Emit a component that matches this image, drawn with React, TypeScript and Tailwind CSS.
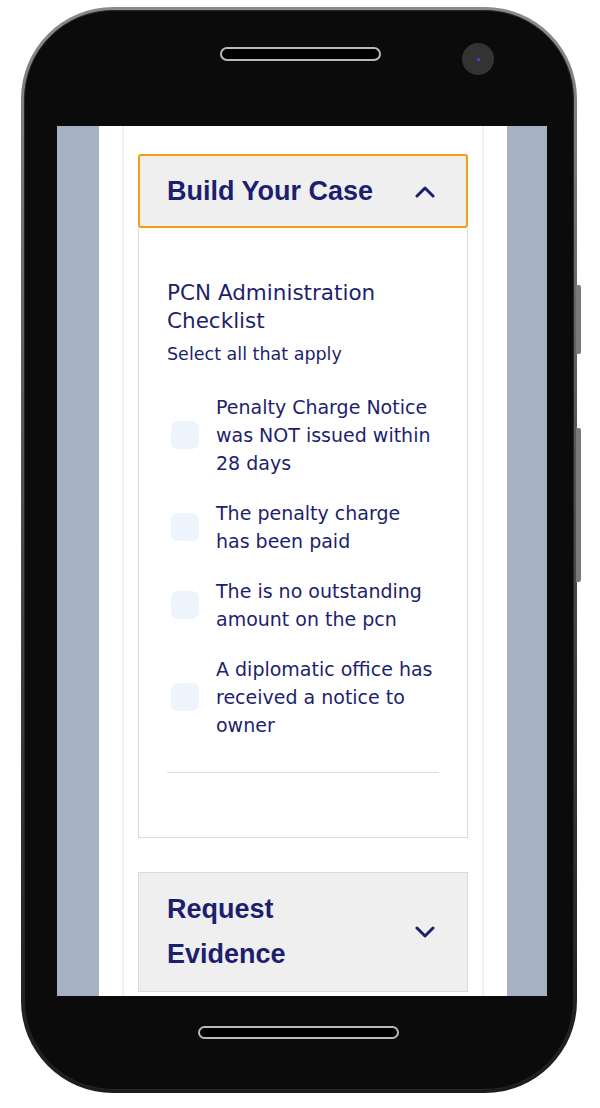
import React from "react";

const navy = "text-[#1d1f6e]";

function Chevron({ up }: { up?: boolean }) {
  return (
    <svg width="20" height="13" viewBox="0 0 20 13" className="shrink-0">
      <polyline
        points={up ? "2,11 10,3 18,11" : "2,2 10,10 18,2"}
        fill="none"
        stroke="#1d1f6e"
        strokeWidth="3"
        strokeLinecap="round"
        strokeLinejoin="round"
      />
    </svg>
  );
}

function Item({ text }: { text: string }) {
  return (
    <div className="flex items-center">
      <div className="ml-[4px] h-[28px] w-[28px] shrink-0 rounded-[7px] bg-[#edf4fe]" />
      <div className={`ml-[17px] w-[220px] text-[19px] leading-[28px] ${navy}`}>{text}</div>
    </div>
  );
}

export default function App() {
  return (
    <div className="relative h-[1108px] w-[600px] overflow-hidden bg-white" style={{ fontFamily: "'DejaVu Sans', Verdana, sans-serif" }}>
      {/* side buttons */}
      <div className="absolute left-[576px] top-[285px] h-[69px] w-[5px] rounded-r-[2px] bg-[#7a7a7a]" />
      <div className="absolute left-[576px] top-[428px] h-[154px] w-[5px] rounded-r-[2px] bg-[#7a7a7a]" />

      <div className="ml-[21px] mt-[7px] h-[1086px] w-[556px] rounded-[92px] bg-linear-to-b from-[#8a8a8a] via-[#4a4a4a] to-[#1c1c1c] p-[3px]">
        <div className="flex h-full w-full flex-col rounded-[89px] border border-[#262626] bg-[#0b0b0b]">
          {/* top bezel */}
          <div className="flex h-[115px] shrink-0 items-start">
            <div className="ml-[195px] mt-[36px] h-[14px] w-[161px] rounded-full border-2 border-[#b9b9b9] bg-black" />
            <div className="ml-[81px] mt-[32px] flex h-[32px] w-[32px] items-center justify-center rounded-full bg-[#333333]">
              <div className="h-[3px] w-[3px] rounded-full bg-[#3a4cff]" />
            </div>
          </div>

          {/* screen */}
          <div className="ml-[32px] flex h-[870px] w-[490px] shrink-0 justify-center overflow-hidden bg-[#a6b2c4]">
            <div className="ml-[2px] flex h-full w-[408px] justify-center bg-white">
              <div className="h-[900px] w-[362px] border-x-2 border-[#f1f1f1] px-[14px] pt-[28px]">
                {/* Build Your Case header */}
                <div className="flex items-center justify-between rounded-[3px] border-2 border-[#eea20f] bg-[#efefef] py-[12.5px] pl-[27px] pr-[31px]">
                  <div className={`w-[220px] text-[27px] font-bold leading-[45px] ${navy}`} style={{ fontFamily: "'Liberation Sans', Arial, sans-serif" }}>
                    Build Your Case
                  </div>
                  <Chevron up />
                </div>
                {/* panel */}
                <div className="border-x border-b border-[#dcdcdc] px-[28px] pb-[64px] pt-[51px]">
                  <div className={`text-[21.5px] leading-[28px] ${navy}`}>PCN Administration Checklist</div>
                  <div className={`mt-[7px] text-[17.5px] leading-[24px] ${navy}`}>Select all that apply</div>
                  <div className="mt-[27px] flex flex-col gap-[22px]">
                    <Item text="Penalty Charge Notice was NOT issued within 28 days" />
                    <Item text="The penalty charge has been paid" />
                    <Item text="The is no outstanding amount on the pcn" />
                    <Item text="A diplomatic office has received a notice to owner" />
                  </div>
                  <div className="mt-[33px] h-px bg-[#dedede]" />
                </div>
                {/* Request Evidence header */}
                <div className="mt-[34px] flex items-center justify-between border border-[#dadada] bg-[#efefef] py-[14px] pl-[28px] pr-[32px]">
                  <div className={`w-[220px] text-[27px] font-bold leading-[45px] ${navy}`} style={{ fontFamily: "'Liberation Sans', Arial, sans-serif" }}>
                    Request Evidence
                  </div>
                  <Chevron />
                </div>
              </div>
            </div>
          </div>

          {/* bottom bezel */}
          <div className="flex flex-1 items-start">
            <div className="ml-[173px] mt-[30px] h-[13px] w-[201px] rounded-full border-2 border-[#b9b9b9] bg-black" />
          </div>
        </div>
      </div>
    </div>
  );
}
